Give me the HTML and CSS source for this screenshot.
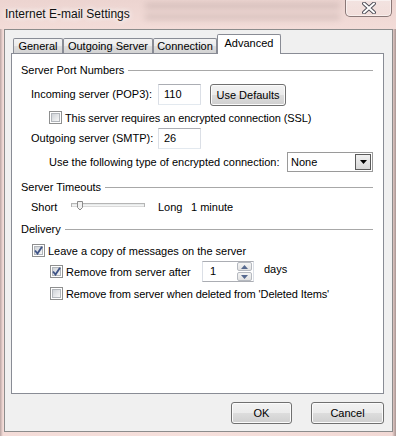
FILE: index.html
```html
<!DOCTYPE html>
<html lang="en">

<head>
    <meta charset="UTF-8">
    <title>Internet E-mail Settings</title>
    <link rel="stylesheet" href="styles.css">
</head>

<body>
    <div class="titlebar">
        <span class="title">Internet E-mail Settings</span>
        <div class="close">
            <svg width="16" height="12" viewBox="0 0 16 12">
                <path d="M3 1.5 L13 10.5 M13 1.5 L3 10.5"
                    stroke="#4b4b55" stroke-width="3.8" stroke-linecap="round" fill="none" />
                <path d="M3 1.5 L13 10.5 M13 1.5 L3 10.5" stroke="#fff" stroke-width="2"
                    stroke-linecap="round" fill="none" />
            </svg>
        </div>
    </div>

    <div class="client">
        <div class="tabs">
            <div class="tab tab-general">General</div>
            <div class="tab tab-outgoing">Outgoing Server</div>
            <div class="tab tab-connection">Connection</div>
            <div class="tab tab-advanced active">Advanced</div>
        </div>

        <div class="panel">
            <div class="group-title"><span>Server Port Numbers</span></div>

            <div class="row port-row first-port">
                <span class="port-label">Incoming server (POP3):</span>
                <div class="field port">110</div>
                <button class="btn defaults">Use Defaults</button>
            </div>

            <div class="row check-row ssl-row">
                <span class="check"><span class="box"></span></span>
                <span>This server requires an encrypted connection (SSL)</span>
            </div>

            <div class="row port-row second-port">
                <span class="port-label">Outgoing server (SMTP):</span>
                <div class="field port">26</div>
            </div>

            <div class="row enc-row">
                <span>Use the following type of encrypted connection:</span>
                <div class="select">
                    <span>None</span>
                    <span class="select-arrow">
                        <svg width="7" height="4" viewBox="0 0 7 4"><path d="M0 0 H7 L3.5 4 Z" fill="#000" /></svg>
                    </span>
                </div>
            </div>

            <div class="group-title timeouts-title"><span>Server Timeouts</span></div>

            <div class="row slider-row">
                <span class="slider-short">Short</span>
                <svg class="slider" width="74" height="16" viewBox="0 0 74 16">
                    <rect x="0.5" y="4.5" width="73" height="3" fill="#e7eaea" stroke="#b5b5b5" />
                    <line x1="1" y1="7" x2="73" y2="7" stroke="#fff" />
                    <path d="M6.5 2.5 H11.5 V8.5 L9 11 L6.5 8.5 Z" fill="#f1f1f1" stroke="#8b8b8b" />
                </svg>
                <span class="slider-long">Long</span>
                <span>1 minute</span>
            </div>

            <div class="group-title delivery-title"><span>Delivery</span></div>

            <div class="row check-row leave-row">
                <span class="check"><span class="box"><svg width="9" height="9" viewBox="0 0 9 9">
                            <path d="M1 4.5 L3.5 7.5 L8 0.8" stroke="#3f5487" stroke-width="1.9" fill="none" />
                        </svg></span></span>
                <span>Leave a copy of messages on the server</span>
            </div>

            <div class="row check-row remove-row">
                <span class="check"><span class="box"><svg width="9" height="9" viewBox="0 0 9 9">
                            <path d="M1 4.5 L3.5 7.5 L8 0.8" stroke="#3f5487" stroke-width="1.9" fill="none" />
                        </svg></span></span>
                <span class="remove-label">Remove from server after</span>
                <div class="spin">
                    <span class="spin-value">1</span>
                    <span class="spin-btns">
                        <span class="spin-btn"><svg width="7" height="4" viewBox="0 0 7 4"><path d="M0 4 H7 L3.5 0 Z" fill="#56698f" /></svg></span>
                        <span class="spin-btn"><svg width="7" height="4" viewBox="0 0 7 4"><path d="M0 0 H7 L3.5 4 Z" fill="#56698f" /></svg></span>
                    </span>
                </div>
                <span class="days">days</span>
            </div>

            <div class="row check-row deleted-row">
                <span class="check"><span class="box"></span></span>
                <span>Remove from server when deleted from 'Deleted Items'</span>
            </div>
        </div>

        <div class="actions">
            <button class="btn ok">OK</button>
            <button class="btn cancel">Cancel</button>
        </div>
    </div>
</body>

</html>
```

FILE: styles.css
```css
* {
    box-sizing: border-box;
}

body {
    margin: 0;
    width: 396px;
    height: 436px;
    overflow: hidden;
    font-family: "Liberation Sans", Arial, sans-serif;
    font-size: 11px;
    color: #000;
    background: linear-gradient(90deg, #b9a4a2 0, #f4dcd8 3px, #f6e0dc 50%, #f2d9d5 calc(100% - 4px), #a99592 100%);
}

/* title bar */
.titlebar {
    position: relative;
    height: 29px;
    display: flex;
    align-items: flex-start;
    padding-left: 5px;
    background: linear-gradient(#ecd4d0, #f3dcd8);
}

.titlebar::before {
    content: "";
    position: absolute;
    left: 145px;
    top: 2px;
    width: 195px;
    height: 22px;
    background: repeating-linear-gradient(transparent 0 2px, #7d6c6a 2px 6px, transparent 6px 11px);
    opacity: 0.3;
    filter: blur(3px);
}

.title {
    position: relative;
    margin-top: 7px;
    font-size: 12px;
    color: #111;
    text-shadow: 0 0 6px #fff, 0 0 6px #fff;
}

.close {
    position: relative;
    margin-left: auto;
    margin-right: 4px;
    width: 47px;
    height: 17px;
    display: flex;
    align-items: center;
    justify-content: center;
    border: 1px solid #8a7877;
    border-top: none;
    border-radius: 0 0 5px 5px;
    background: linear-gradient(rgba(255, 255, 255, 0.35), rgba(255, 255, 255, 0.15));
    box-shadow: inset 0 0 0 1px rgba(255, 255, 255, 0.5);
}

/* dialog body */
.client {
    margin: 0 3px 0 4px;
    height: 403px;
    border: 1px solid #8c8c8c;
    background: #f0f0f0;
    padding: 4px 8px 0 6px;
}

.tabs {
    position: relative;
    z-index: 1;
    display: flex;
    align-items: flex-end;
    height: 20px;
    padding-left: 2px;
    margin-bottom: -1px;
}

.tab {
    height: 15px;
    margin-bottom: 1px;
    border: 1px solid #898c95;
    border-bottom: none;
    border-radius: 2px 2px 0 0;
    background: linear-gradient(#f3f3f3, #ebebeb 50%, #dedede 50%, #d3d3d3);
    text-align: center;
    line-height: 15px;
}

.tab-general {
    width: 50px;
}

.tab-outgoing {
    width: 90px;
}

.tab-connection {
    width: 64px;
}

.tab-advanced {
    width: 64px;
}

.tab.active {
    height: 20px;
    margin-bottom: 0;
    background: #fff;
    line-height: 16px;
}

.panel {
    width: 373px;
    height: 341px;
    border: 1px solid #898c95;
    background: #fff;
    padding: 8px 10px 0 9px;
}

.group-title {
    display: flex;
    align-items: center;
    height: 16px;
    gap: 4px;
}

.group-title::after {
    content: "";
    flex: 1;
    border-top: 1px solid #a8a8a8;
}

.row {
    display: flex;
    align-items: center;
}

.port-row {
    height: 22px;
    align-items: flex-start;
    padding-left: 10px;
}

.port-row .port-label {
    width: 127px;
    line-height: 21px;
}

.first-port {
    margin-top: 6px;
}

.second-port {
    margin-top: 4px;
    height: 21px;
}

.field {
    height: 21px;
    border: 1px solid #abadb3;
    border-left-color: #dbdfe6;
    border-right-color: #dbdfe6;
    border-bottom-color: #e3e9ef;
    background: #fff;
    padding-left: 5px;
    line-height: 19px;
}

.port {
    width: 43px;
}

.btn {
    height: 22px;
    padding: 0;
    border: 1px solid #707070;
    border-radius: 3px;
    background: linear-gradient(#f2f2f2, #ebebeb 50%, #dddddd 50%, #cfcfcf);
    box-shadow: inset 0 0 0 1px #fbfbfb;
    font-family: inherit;
    font-size: 11px;
    color: #000;
}

.defaults {
    width: 76px;
    margin-left: 9px;
}

.check-row {
    gap: 3px;
}

.check {
    width: 13px;
    height: 13px;
    flex: none;
    border: 1px solid #8e8f8f;
    background: #fff;
    padding: 1px;
}

.box {
    display: block;
    width: 9px;
    height: 9px;
    border: 1px solid #b2b6bb;
    background: linear-gradient(135deg, #cfd3d8, #f7f7f7);
}

.box svg {
    display: block;
    margin: -1px 0 0 -1px;
}

.ssl-row {
    margin-top: 5px;
    height: 13px;
    padding-left: 28px;
    letter-spacing: -0.1px;
}

.enc-row {
    margin-top: 2px;
    height: 21px;
    padding-left: 28px;
}

.select {
    margin-left: auto;
    width: 86px;
    height: 20px;
    display: flex;
    align-items: center;
    padding-left: 3px;
    border: 1px solid #9a9a9a;
    background: #fff;
}

.select-arrow {
    margin-left: auto;
    margin-right: 1px;
    width: 16px;
    height: 16px;
    display: flex;
    align-items: center;
    justify-content: center;
    border: 1px solid #5a5a5a;
    background: linear-gradient(#f0f0f0, #d8d8d8);
}

.timeouts-title {
    margin-top: 7px;
}

.slider-row {
    margin-top: 4px;
    height: 16px;
    padding-left: 10px;
}

.slider-short {
    width: 40px;
}

.slider {
    display: block;
}

.slider-long {
    margin-left: 13px;
    width: 33px;
}

.delivery-title {
    margin-top: 6px;
}

.leave-row {
    margin-top: 7px;
    height: 13px;
    padding-left: 11px;
}

.remove-row {
    margin-top: 4px;
    height: 21px;
    padding-left: 29px;
}

.remove-label {
    width: 133px;
}

.spin {
    width: 52px;
    height: 21px;
    display: flex;
    border: 1px solid #abadb3;
    border-left-color: #dbdfe6;
    border-right-color: #dbdfe6;
    background: #fff;
}

.spin-value {
    flex: 1;
    padding-left: 7px;
    line-height: 19px;
}

.spin-btns {
    width: 16px;
    display: flex;
    flex-direction: column;
    gap: 1px;
    padding: 0 1px 0 0;
}

.spin-btn {
    flex: 1;
    display: flex;
    align-items: center;
    justify-content: center;
    border: 1px solid #b5b9c0;
    border-radius: 2px;
    background: linear-gradient(#f4f4f4, #e2e2e2);
}

.days {
    align-self: flex-start;
    margin-left: 7px;
    line-height: 16px;
}

.deleted-row {
    margin-top: 5px;
    height: 13px;
    padding-left: 29px;
    letter-spacing: -0.1px;
}

/* dialog buttons */
.actions {
    display: flex;
    justify-content: flex-end;
    margin-top: 8px;
    width: 373px;
}

.ok {
    width: 61px;
}

.cancel {
    width: 73px;
    margin-left: 19px;
}
```
